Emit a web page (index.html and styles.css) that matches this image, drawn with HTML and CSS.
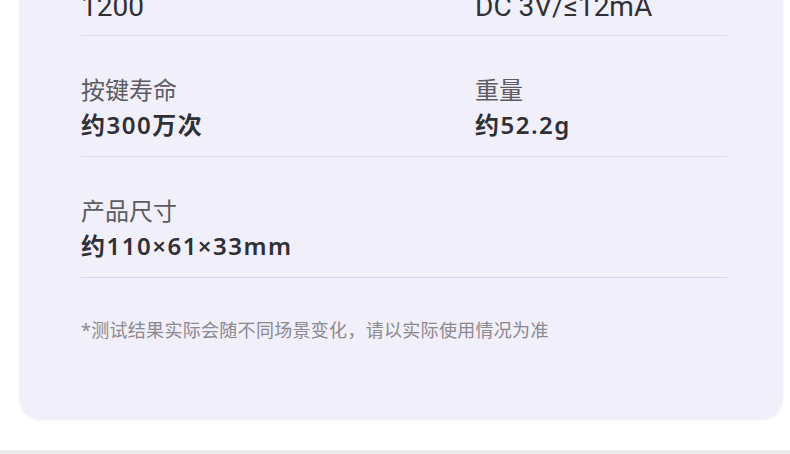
FILE: index.html
```html
<!DOCTYPE html>
<html lang="zh-CN">
<head>
    <meta charset="UTF-8">
    <meta name="viewport" content="width=device-width, initial-scale=1.0">
    <title>产品参数</title>
    <link rel="stylesheet" href="styles.css">
</head>
<body>

    <div class="spec-card">
        <div class="spec-row">
            <div class="spec-item">
                <div class="spec-label">分辨率</div>
                <div class="spec-value plain">1200</div>
            </div>
            <div class="spec-item">
                <div class="spec-label">额定电压/电流</div>
                <div class="spec-value plain">DC 3V/≤12mA</div>
            </div>
        </div>
        <div class="spec-row">
            <div class="spec-item">
                <div class="spec-label">按键寿命</div>
                <div class="spec-value">约300万次</div>
            </div>
            <div class="spec-item">
                <div class="spec-label">重量</div>
                <div class="spec-value">约52.2g</div>
            </div>
        </div>
        <div class="spec-row">
            <div class="spec-item">
                <div class="spec-label">产品尺寸</div>
                <div class="spec-value">约110×61×33mm</div>
            </div>
        </div>
        <p class="spec-note">*测试结果实际会随不同场景变化，请以实际使用情况为准</p>
    </div>

    <div class="bottom-bar"></div>

</body>
</html>
```

FILE: styles.css
```css
body {
    font-family: 'Noto Sans', 'Noto Sans CJK SC', sans-serif;
    margin: 0;
    background: #fff;
    color: #333;
    height: 454px;
    overflow: hidden;
    display: flex;
    flex-direction: column;
}

.spec-card {
    margin: -120px 7px 0 19px;
    padding: 35px 56px 77px 62px;
    background: #f1effa;
    border-radius: 0 0 22px 22px;
    box-shadow: 0 1px 4px rgba(60, 50, 120, 0.04);
}

.spec-row {
    display: grid;
    grid-template-columns: 394px 1fr;
    padding: 39px 0 16px;
    border-bottom: 1px solid #d9d7e1;
}

.spec-label {
    font-size: 24px;
    line-height: 30px;
    color: #5c5b62;
}

.spec-value {
    margin-top: 5px;
    font-size: 24px;
    line-height: 30px;
    font-weight: 600;
    letter-spacing: 1.5px;
    color: #2f2f35;
}

.spec-value.plain {
    font-family: 'Roboto', 'Noto Sans CJK SC', sans-serif;
    font-size: 28px;
    font-weight: 400;
    letter-spacing: 0;
    position: relative;
    top: 3px;
}

.spec-note {
    margin: 39px 0 0;
    font-size: 18px;
    line-height: 26px;
    letter-spacing: 0.3px;
    color: #8a8990;
}

.bottom-bar {
    margin-top: auto;
    height: 4px;
    background: #ebebeb;
}
```
